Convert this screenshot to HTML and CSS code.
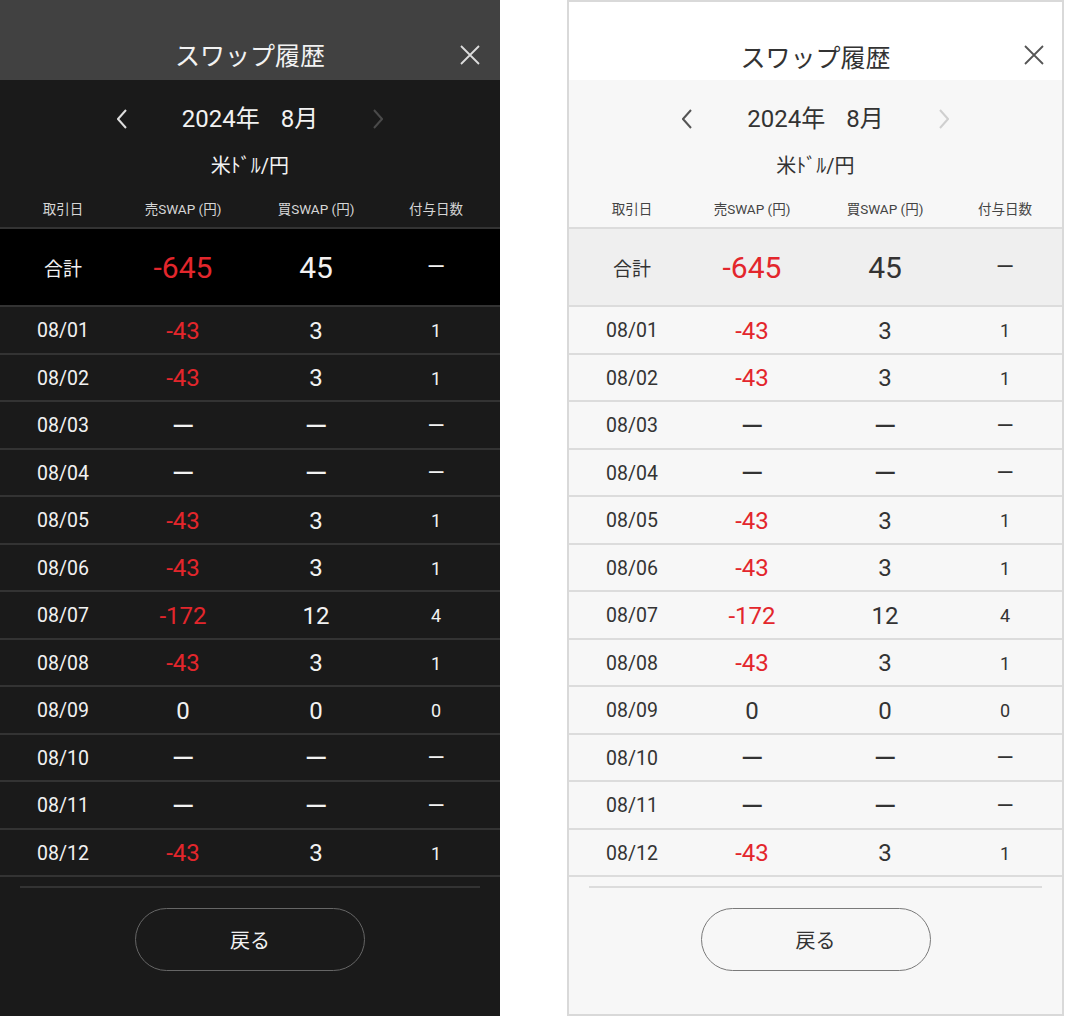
FILE: index.html
```html
<!DOCTYPE html>
<html lang="ja">
<head>
<meta charset="utf-8">
<title>スワップ履歴</title>
<link rel="stylesheet" href="styles.css">
</head>
<body>
<div class="screens">
  <section class="panel dark">
    <header class="bar">
      <h1 class="title">スワップ履歴</h1>
      <svg class="close" viewBox="0 0 20 20" width="20" height="20"><path d="M1 1L19 19M19 1L1 19"/></svg>
    </header>
    <div class="month">
      <svg class="chev prev" viewBox="0 0 10 20" width="10" height="20"><path d="M9 1L1 10L9 19"/></svg>
      <div class="month-text"><span>2024年</span><span class="mon">8月</span></div>
      <svg class="chev next" viewBox="0 0 10 20" width="10" height="20"><path d="M1 1L9 10L1 19"/></svg>
    </div>
    <div class="pair">米ﾄﾞﾙ/円</div>
    <div class="row colhead"><span>取引日</span><span>売SWAP (円)</span><span>買SWAP (円)</span><span>付与日数</span></div>
    <div class="row total"><span class="lbl">合計</span><span class="val neg">-645</span><span class="val">45</span><span class="dash">—</span></div>
    <div class="row day"><span class="d">08/01</span><span class="v neg">-43</span><span class="v">3</span><span class="n">1</span></div>
    <div class="row day"><span class="d">08/02</span><span class="v neg">-43</span><span class="v">3</span><span class="n">1</span></div>
    <div class="row day"><span class="d">08/03</span><span class="v dv">—</span><span class="v dv">—</span><span class="n dn">—</span></div>
    <div class="row day"><span class="d">08/04</span><span class="v dv">—</span><span class="v dv">—</span><span class="n dn">—</span></div>
    <div class="row day"><span class="d">08/05</span><span class="v neg">-43</span><span class="v">3</span><span class="n">1</span></div>
    <div class="row day"><span class="d">08/06</span><span class="v neg">-43</span><span class="v">3</span><span class="n">1</span></div>
    <div class="row day"><span class="d">08/07</span><span class="v neg">-172</span><span class="v">12</span><span class="n">4</span></div>
    <div class="row day"><span class="d">08/08</span><span class="v neg">-43</span><span class="v">3</span><span class="n">1</span></div>
    <div class="row day"><span class="d">08/09</span><span class="v">0</span><span class="v">0</span><span class="n">0</span></div>
    <div class="row day"><span class="d">08/10</span><span class="v dv">—</span><span class="v dv">—</span><span class="n dn">—</span></div>
    <div class="row day"><span class="d">08/11</span><span class="v dv">—</span><span class="v dv">—</span><span class="n dn">—</span></div>
    <div class="row day"><span class="d">08/12</span><span class="v neg">-43</span><span class="v">3</span><span class="n">1</span></div>
    <hr class="sep">
    <div class="actions"><button class="back">戻る</button></div>
  </section>

  <section class="panel light">
    <header class="bar">
      <h1 class="title">スワップ履歴</h1>
      <svg class="close" viewBox="0 0 20 20" width="20" height="20"><path d="M1 1L19 19M19 1L1 19"/></svg>
    </header>
    <div class="month">
      <svg class="chev prev" viewBox="0 0 10 20" width="10" height="20"><path d="M9 1L1 10L9 19"/></svg>
      <div class="month-text"><span>2024年</span><span class="mon">8月</span></div>
      <svg class="chev next" viewBox="0 0 10 20" width="10" height="20"><path d="M1 1L9 10L1 19"/></svg>
    </div>
    <div class="pair">米ﾄﾞﾙ/円</div>
    <div class="row colhead"><span>取引日</span><span>売SWAP (円)</span><span>買SWAP (円)</span><span>付与日数</span></div>
    <div class="row total"><span class="lbl">合計</span><span class="val neg">-645</span><span class="val">45</span><span class="dash">—</span></div>
    <div class="row day"><span class="d">08/01</span><span class="v neg">-43</span><span class="v">3</span><span class="n">1</span></div>
    <div class="row day"><span class="d">08/02</span><span class="v neg">-43</span><span class="v">3</span><span class="n">1</span></div>
    <div class="row day"><span class="d">08/03</span><span class="v dv">—</span><span class="v dv">—</span><span class="n dn">—</span></div>
    <div class="row day"><span class="d">08/04</span><span class="v dv">—</span><span class="v dv">—</span><span class="n dn">—</span></div>
    <div class="row day"><span class="d">08/05</span><span class="v neg">-43</span><span class="v">3</span><span class="n">1</span></div>
    <div class="row day"><span class="d">08/06</span><span class="v neg">-43</span><span class="v">3</span><span class="n">1</span></div>
    <div class="row day"><span class="d">08/07</span><span class="v neg">-172</span><span class="v">12</span><span class="n">4</span></div>
    <div class="row day"><span class="d">08/08</span><span class="v neg">-43</span><span class="v">3</span><span class="n">1</span></div>
    <div class="row day"><span class="d">08/09</span><span class="v">0</span><span class="v">0</span><span class="n">0</span></div>
    <div class="row day"><span class="d">08/10</span><span class="v dv">—</span><span class="v dv">—</span><span class="n dn">—</span></div>
    <div class="row day"><span class="d">08/11</span><span class="v dv">—</span><span class="v dv">—</span><span class="n dn">—</span></div>
    <div class="row day"><span class="d">08/12</span><span class="v neg">-43</span><span class="v">3</span><span class="n">1</span></div>
    <hr class="sep">
    <div class="actions"><button class="back">戻る</button></div>
  </section>
</div>
</body>
</html>
```

FILE: styles.css
```css
* { box-sizing: border-box; }
html, body { margin: 0; padding: 0; background: #ffffff; }
body {
  font-family: Roboto, "Noto Sans CJK JP", "Noto Sans", sans-serif;
  width: 1067px;
  height: 1016px;
  overflow: hidden;
}
.screens {
  display: flex;
  gap: 67px;
  height: 1016px;
}
.panel {
  width: 500px;
  height: 1016px;
  display: flex;
  flex-direction: column;
  overflow: hidden;
}

/* theme colours */
.dark {
  --bar: #414141;
  --bg: #1a1a1a;
  --total: #000000;
  --line: #333333;
  --text: #f2f2f2;
  --sub: #d6d6d6;
  --icon: #dddddd;
  --dim: #4a4a4a;
  --btn: #666666;
  background: var(--bg);
}
.light {
  --bar: #ffffff;
  --bg: #f7f7f7;
  --total: #efefef;
  --line: #dcdcdc;
  --text: #333333;
  --sub: #444444;
  --icon: #555555;
  --dim: #cfcfcf;
  --btn: #7a7a7a;
  background: var(--bg);
  width: 497px;
  border: 2px solid #d9d9d9;
}

.bar {
  position: relative;
  height: 80px;
  flex: 0 0 80px;
  background: var(--bar);
  display: flex;
  justify-content: center;
}
.light .bar { height: 78px; flex-basis: 78px; }
.title {
  margin: 0;
  padding-top: 40px;
  font-size: 25px;
  line-height: 34px;
  font-weight: 400;
  color: var(--text);
  height: 0;
}
.close {
  position: absolute;
  right: 20px;
  top: 45px;
  fill: none;
  stroke: var(--icon);
  stroke-width: 1.8;
}
.light .close { top: 43px; right: 18px; }

.month {
  margin-top: 19px;
  height: 40px;
  display: flex;
  align-items: center;
  justify-content: center;
  gap: 55px;
  color: var(--text);
}
.month-text {
  font-size: 24px;
  line-height: 40px;
  white-space: nowrap;
}
.month-text .mon { margin-left: 21px; }
.chev { fill: none; stroke-width: 2; }
.chev.prev { stroke: var(--icon); }
.chev.next { stroke: var(--dim); }

.pair {
  margin-top: 12px;
  height: 30px;
  line-height: 30px;
  text-align: center;
  font-size: 20px;
  color: var(--text);
}

.row {
  display: grid;
  grid-template-columns: 126px 114px 152px 88px;
  align-items: center;
  justify-items: center;
  border-bottom: 2px solid var(--line);
  white-space: nowrap;
}
.colhead {
  height: 48px;
  padding-top: 8px;
  font-size: 13.5px;
  color: var(--sub);
}
.total {
  height: 78px;
  padding-top: 1px;
  background: var(--total);
  color: var(--text);
}
.total .lbl { font-size: 19px; }
.total .val { font-size: 30px; }
.total .dash { font-size: 23px; }
.day {
  height: 47.5px;
  padding-top: 2px;
  color: var(--text);
}
.day .d { font-size: 19.5px; }
.day .v { font-size: 24px; }
.day .n { font-size: 18px; }
.day .dv { font-size: 29px; line-height: 30px; }
.day .dn { font-size: 22px; line-height: 24px; }
.neg { color: #e3262c; }

.sep {
  margin: 9px 20px 0;
  border: 0;
  border-top: 2px solid var(--line);
  height: 0;
}
.actions {
  display: flex;
  justify-content: center;
  margin-top: 20px;
}
.back {
  width: 230px;
  height: 63px;
  border-radius: 32px;
  border: 1.5px solid var(--btn);
  background: transparent;
  color: var(--text);
  font-family: Roboto, "Noto Sans CJK JP", sans-serif;
  font-size: 20px;
  padding: 0;
}
```
